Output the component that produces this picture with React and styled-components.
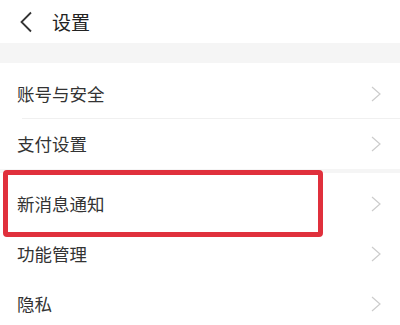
import React from 'react';
import styled, { createGlobalStyle } from 'styled-components';

const GlobalStyle = createGlobalStyle`
  html, body {
    margin: 0;
    padding: 0;
    background: #fff;
    font-family: "Noto Sans CJK SC", "Noto Sans", sans-serif;
  }
`;

const groups = [
  ['账号与安全', '支付设置'],
  ['新消息通知', '功能管理', '隐私'],
];

const highlighted = '新消息通知';

const App = () => {
  return (
    <Page>
      <GlobalStyle />
      <Header>
        <BackIcon viewBox="0 0 14 22">
          <path d="M12 1.5 L2.5 11 L12 20.5" />
        </BackIcon>
        <Title>设置</Title>
      </Header>
      <Band />
      {groups.map((items, gi) => (
        <Group key={gi} $first={gi === 0}>
          {items.map((label, i) => (
            <Row key={label} $divider={gi === 0 && i < items.length - 1}>
              <Label>{label}</Label>
              <Chevron viewBox="0 0 12 18">
                <path d="M2 2 L10 9 L2 16" />
              </Chevron>
              {label === highlighted && <Highlight />}
            </Row>
          ))}
        </Group>
      ))}
    </Page>
  );
};

// Styles
const Page = styled.div`
  width: 400px;
  height: 325px;
  overflow: hidden;
  background: #fff;
`;

const Header = styled.div`
  height: 43px;
  display: flex;
  align-items: center;
  padding-left: 19px;
  gap: 19px;
  box-sizing: border-box;
`;

const BackIcon = styled.svg`
  width: 14px;
  height: 22px;
  fill: none;
  stroke: #333;
  stroke-width: 1.8;
`;

const Title = styled.h1`
  margin: 0;
  font-size: 19px;
  font-weight: 400;
  color: #222;
  line-height: 1;
`;

const Band = styled.div`
  height: 20px;
  background: #f5f5f5;
`;

const Group = styled.div`
  padding-top: 6px;
  border-top: ${(props) => (props.$first ? 'none' : '4px solid #f5f5f5')};
`;

const Row = styled.div`
  position: relative;
  height: 50px;
  display: flex;
  align-items: center;
  justify-content: space-between;
  padding: 0 18px 0 17px;
  box-sizing: border-box;
  &::after {
    content: '';
    display: ${(props) => (props.$divider ? 'block' : 'none')};
    position: absolute;
    left: 22px;
    right: 0;
    bottom: 0;
    height: 1px;
    background: #f0f0f0;
  }
`;

const Label = styled.span`
  font-size: 17.5px;
  color: #333;
  line-height: 1;
`;

const Chevron = styled.svg`
  width: 12px;
  height: 18px;
  fill: none;
  stroke: #cccccc;
  stroke-width: 1.2;
`;

const Highlight = styled.div`
  position: absolute;
  left: 3px;
  top: -9px;
  width: 320px;
  height: 67px;
  border: 5px solid #e0303c;
  border-radius: 4px;
  box-sizing: border-box;
  pointer-events: none;
`;

export default App;
